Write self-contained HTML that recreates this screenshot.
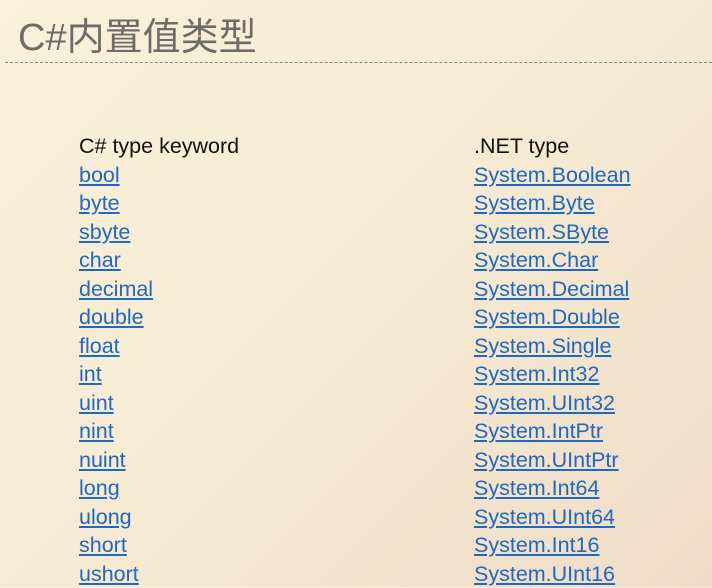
<!DOCTYPE html>
<html><head><meta charset="utf-8"><style>
html,body{margin:0;padding:0}
body{width:712px;height:587px;overflow:hidden;position:relative;background:linear-gradient(135deg,#f9f1da 0%,#f6ead2 50%,#efdcc6 100%);font-family:"Liberation Sans","Noto Sans CJK SC",sans-serif}
h1{position:absolute;left:18px;top:15px;margin:0;font-weight:normal;font-size:38px;color:#6e6c69;line-height:46px;font-family:"Liberation Sans Narrow","Liberation Sans","Noto Sans CJK SC",sans-serif;letter-spacing:0}
.dash{position:absolute;left:5px;right:0;top:62px;border-top:1px dashed #8a8580}
.col{position:absolute;top:132px;font-size:21.5px;line-height:28.5px;color:#111}
.col a{display:block;color:#1f68c4;text-decoration:underline}
</style></head><body>
<h1>C#内置值类型</h1>
<div class="dash"></div>
<div class="col" style="left:79px">C# type keyword
<a>bool</a><a>byte</a><a>sbyte</a><a>char</a><a>decimal</a><a>double</a><a>float</a><a>int</a><a>uint</a><a>nint</a><a>nuint</a><a>long</a><a>ulong</a><a>short</a><a>ushort</a></div>
<div class="col" style="left:474px">.NET type
<a>System.Boolean</a><a>System.Byte</a><a>System.SByte</a><a>System.Char</a><a>System.Decimal</a><a>System.Double</a><a>System.Single</a><a>System.Int32</a><a>System.UInt32</a><a>System.IntPtr</a><a>System.UIntPtr</a><a>System.Int64</a><a>System.UInt64</a><a>System.Int16</a><a>System.UInt16</a></div>
</body></html>
